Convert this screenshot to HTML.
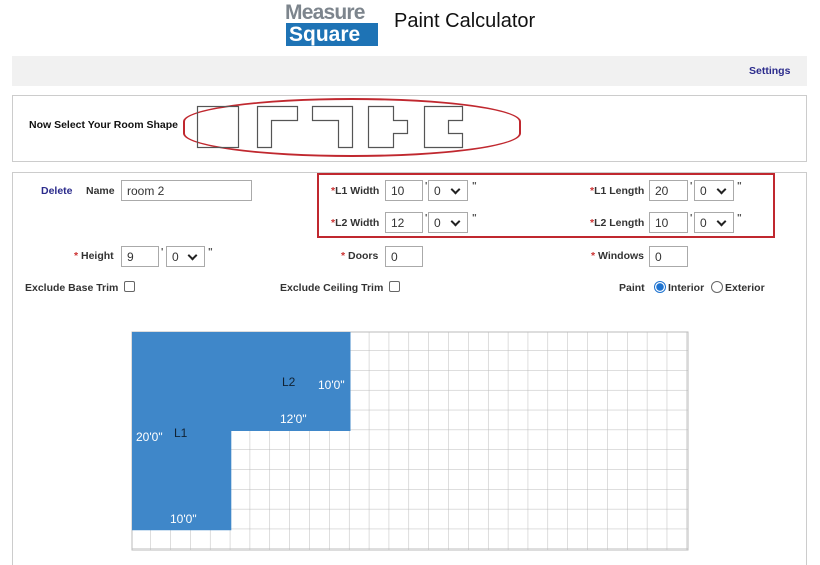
<!DOCTYPE html>
<html style="width:820px;height:565px;overflow:hidden"><head><meta charset="utf-8"><style>
*{box-sizing:border-box;margin:0;padding:0}
body{width:820px;height:565px;background:#fff;font-family:"Liberation Sans",Arial,sans-serif;position:relative;overflow:hidden;color:#222}
.a{position:absolute}
.lbl{position:absolute;font-size:10.5px;font-weight:bold;color:#333;white-space:nowrap}
.r{color:#c33}
.in{position:absolute;border:1px solid #aaa;height:21px;font-size:12px;padding:3px 5px;color:#333;background:#fff}
.sel{position:absolute;border:1px solid #aaa;height:21px;font-size:12px;padding:3px 5px;color:#333;background:#fff}
.sel:after{content:"";position:absolute;right:8px;top:5px;width:5px;height:5px;border-right:2px solid #222;border-bottom:2px solid #222;transform:rotate(45deg)}
.q{position:absolute;font-size:10px;color:#555;font-weight:bold}
.cb{position:absolute;width:11px;height:11px;border:1px solid #666;border-radius:2px;background:#fff}
</style></head><body>
<div class="a" style="left:285px;top:1px;font-size:21px;line-height:23px;font-weight:bold;color:#7d858d;letter-spacing:-0.8px">Measure</div>
<div class="a" style="left:286px;top:23px;width:92px;height:23px;background:#1e73b5;color:#fff;font-size:21px;font-weight:bold;line-height:23px;padding-left:3px">Square</div>
<div class="a" style="left:394px;top:10px;font-size:20px;color:#111">Paint Calculator</div>

<div class="a" style="left:12px;top:56px;width:795px;height:30px;background:#f1f1f1"></div>
<div class="a" style="left:749px;top:65px;font-size:10.5px;font-weight:bold;color:#2b2b8c">Settings</div>

<div class="a" style="left:12px;top:95px;width:795px;height:67px;border:1px solid #ccc"></div>
<div class="lbl" style="left:29px;top:119px;color:#111">Now Select Your Room Shape</div>
<div class="a" style="left:183px;top:98px;width:338px;height:59px;border:2px solid #c0282f;border-radius:50%/40%"></div>
<svg class="a" style="left:190px;top:100px" width="300" height="55" fill="none" stroke="#555" stroke-width="1.2">
<rect x="7.5" y="6.5" width="41" height="41"/>
<path d="M67.5 6.5H107.5V20.5H81.5V47.5H67.5Z"/>
<path d="M122.5 6.5H162.5V47.5H148.5V20.5H122.5Z"/>
<path d="M178.5 6.5H203.5V20.5H217.5V33.5H203.5V47.5H178.5Z"/>
<path d="M234.5 6.5H272.5V20.5H258.5V33.5H272.5V47.5H234.5Z"/>
</svg>

<div class="a" style="left:12px;top:172px;width:795px;height:400px;border:1px solid #ccc"></div>
<div class="a" style="left:317px;top:173px;width:458px;height:65px;border:2px solid #c0282f"></div>

<div class="lbl" style="left:41px;top:185px;color:#2b2b8c">Delete</div>
<div class="lbl" style="left:86px;top:185px">Name</div>
<div class="in" style="left:121px;top:180px;width:131px">room 2</div>

<div class="lbl" style="left:331px;top:185px"><span class="r">*</span>L1 Width</div>
<div class="in" style="left:385px;top:180px;width:38px">10</div><div class="q" style="left:425px;top:181px">'</div>
<div class="sel" style="left:428px;top:180px;width:40px">0</div><div class="q" style="left:472px;top:181px">"</div>
<div class="lbl" style="left:331px;top:217px"><span class="r">*</span>L2 Width</div>
<div class="in" style="left:385px;top:212px;width:38px">12</div><div class="q" style="left:425px;top:213px">'</div>
<div class="sel" style="left:428px;top:212px;width:40px">0</div><div class="q" style="left:472px;top:213px">"</div>

<div class="lbl" style="left:590px;top:185px"><span class="r">*</span>L1 Length</div>
<div class="in" style="left:649px;top:180px;width:39px">20</div><div class="q" style="left:690px;top:181px">'</div>
<div class="sel" style="left:694px;top:180px;width:40px">0</div><div class="q" style="left:737px;top:181px">"</div>
<div class="lbl" style="left:590px;top:217px"><span class="r">*</span>L2 Length</div>
<div class="in" style="left:649px;top:212px;width:39px">10</div><div class="q" style="left:690px;top:213px">'</div>
<div class="sel" style="left:694px;top:212px;width:40px">0</div><div class="q" style="left:737px;top:213px">"</div>

<div class="lbl" style="left:74px;top:250px"><span class="r">*</span> Height</div>
<div class="in" style="left:121px;top:246px;width:38px">9</div><div class="q" style="left:161px;top:247px">'</div>
<div class="sel" style="left:166px;top:246px;width:39px">0</div><div class="q" style="left:208px;top:247px">"</div>
<div class="lbl" style="left:341px;top:250px"><span class="r">*</span> Doors</div>
<div class="in" style="left:385px;top:246px;width:38px">0</div>
<div class="lbl" style="left:591px;top:250px"><span class="r">*</span> Windows</div>
<div class="in" style="left:649px;top:246px;width:39px">0</div>

<div class="lbl" style="left:25px;top:282px">Exclude Base Trim</div>
<div class="cb" style="left:124px;top:281px"></div>
<div class="lbl" style="left:280px;top:282px">Exclude Ceiling Trim</div>
<div class="cb" style="left:389px;top:281px"></div>
<div class="lbl" style="left:619px;top:282px">Paint</div>
<div class="a" style="left:654px;top:281px;width:12px;height:12px;border-radius:50%;border:1px solid #1e73d0;background:radial-gradient(#1e73d0 0 3.5px,#fff 4px)"></div>
<div class="lbl" style="left:668px;top:282px">Interior</div>
<div class="a" style="left:711px;top:281px;width:12px;height:12px;border-radius:50%;border:1px solid #666"></div>
<div class="lbl" style="left:725px;top:282px">Exterior</div>

<svg class="a" style="left:131px;top:331px" width="560" height="222">
<defs><pattern id="g" width="19.86" height="19.82" patternUnits="userSpaceOnUse"><path d="M19.86 0V19.82H0" fill="none" stroke="#bbb" stroke-width="1"/></pattern></defs>
<rect x="1" y="1" width="556" height="218" fill="url(#g)" stroke="#bbb"/>
<path d="M1 1H219.5V100H100.3V199.3H1Z" fill="#3f87c9"/>
<g font-family="Liberation Sans,Arial,sans-serif" font-size="12">
<text x="151" y="55" fill="#123">L2</text>
<text x="187" y="58" fill="#fff">10'0"</text>
<text x="149" y="92" fill="#fff">12'0"</text>
<text x="5" y="110" fill="#fff">20'0"</text>
<text x="43" y="106" fill="#123">L1</text>
<text x="39" y="192" fill="#fff">10'0"</text>
</g>
</svg>
</body></html>
